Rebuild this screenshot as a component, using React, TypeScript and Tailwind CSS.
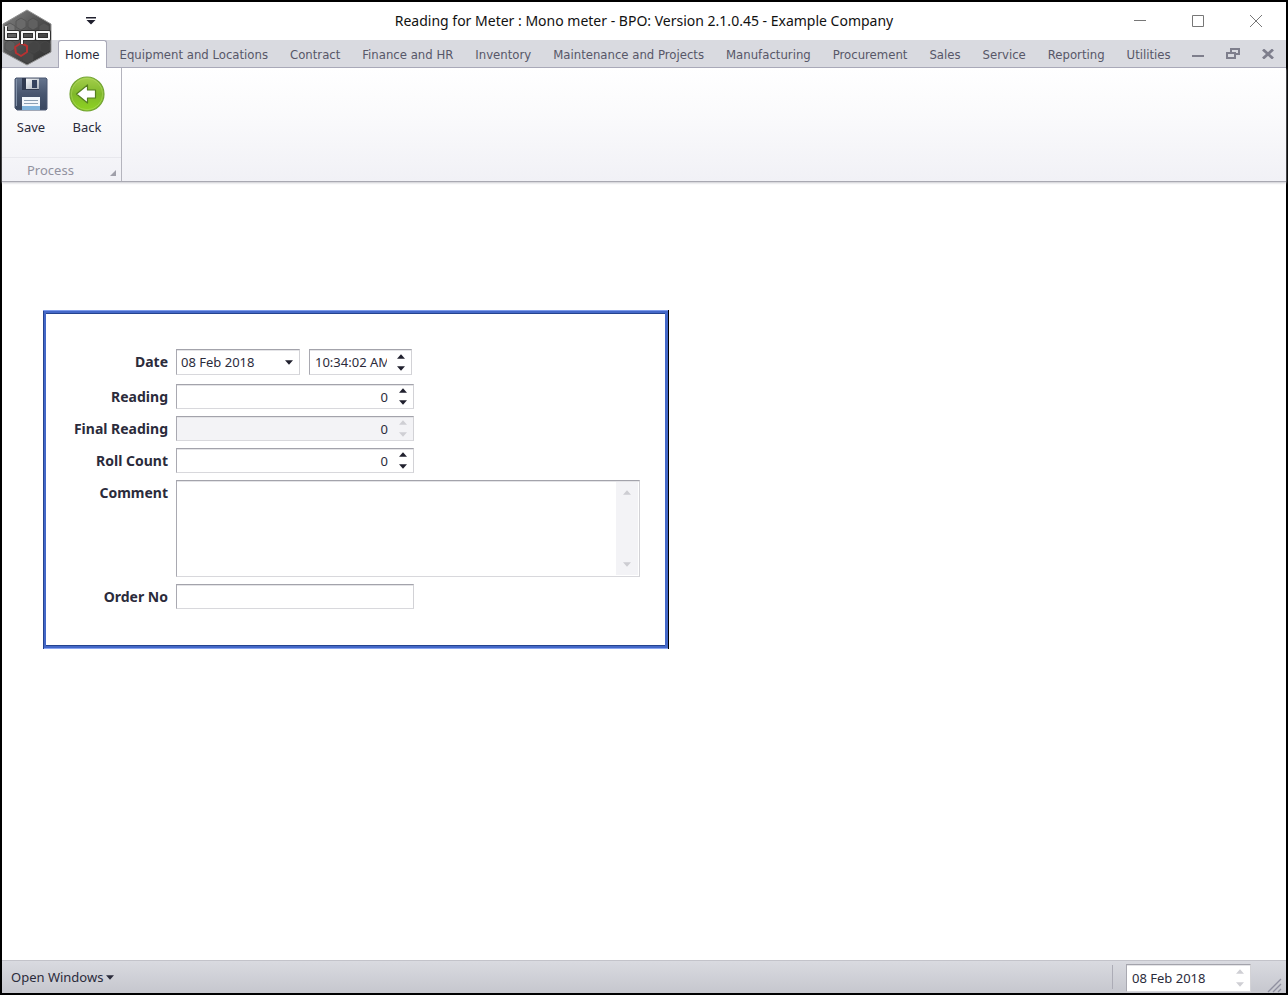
import { useId, useState } from "react";
import type { ReactNode } from "react";

const tabs = [
  "Home",
  "Equipment and Locations",
  "Contract",
  "Finance and HR",
  "Inventory",
  "Maintenance and Projects",
  "Manufacturing",
  "Procurement",
  "Sales",
  "Service",
  "Reporting",
  "Utilities",
];

const fieldBox =
  "flex items-stretch border border-t-[#a3a3ab] border-l-[#a9a9b1] border-r-[#d2d2d6] border-b-[#d8d8dc] shadow-[inset_0_1px_0_#e4e4e7]";

function Arrow({ down = false }: { down?: boolean }) {
  return (
    <svg width="8" height="5" viewBox="0 0 8 5" fill="currentColor" aria-hidden="true">
      <path d={down ? "M0 0.3h8L4 4.8z" : "M4 0.2l4 4.5H0z"} />
    </svg>
  );
}

function Spinner({ name, disabled = false, onStep }: { name: string; disabled?: boolean; onStep?: (n: number) => void }) {
  return (
    <div className={`flex w-5 shrink-0 flex-col ${disabled ? "text-[#cfcfd4]" : "text-[#20202e]"}`}>
      <button
        type="button"
        disabled={disabled}
        aria-label={`Increase ${name}`}
        onClick={() => onStep?.(1)}
        className="flex flex-1 items-center justify-center"
      >
        <Arrow />
      </button>
      <button
        type="button"
        disabled={disabled}
        aria-label={`Decrease ${name}`}
        onClick={() => onStep?.(-1)}
        className="flex flex-1 items-center justify-center"
      >
        <Arrow down />
      </button>
    </div>
  );
}

function Row({ id, label, children }: { id: string; label: string; children: ReactNode }) {
  return (
    <>
      <label htmlFor={id} className="pt-[3px] text-right text-[14px] leading-5 font-bold">
        {label}
      </label>
      <div className="min-w-0">{children}</div>
    </>
  );
}

function NumberRow({ label, disabled = false }: { label: string; disabled?: boolean }) {
  const id = useId();
  const [value, setValue] = useState(0);
  return (
    <Row id={id} label={label}>
      <div className={`${fieldBox} h-[25px] w-[238px] ${disabled ? "bg-[#f3f3f6]" : "bg-white"}`}>
        <input
          id={id}
          type="text"
          inputMode="numeric"
          value={value}
          disabled={disabled}
          onChange={(e) => setValue(Number(e.target.value) || 0)}
          className="min-w-0 flex-1 bg-transparent pr-[5px] text-right outline-none"
        />
        <Spinner name={label} disabled={disabled} onStep={(n) => setValue(value + n)} />
      </div>
    </Row>
  );
}

function Logo() {
  return (
    <svg width="50" height="58" viewBox="0 0 50 58" aria-label="bpo" role="img">
      <defs>
        <linearGradient id="hex" x1="0" y1="0" x2="1" y2="1">
          <stop offset="0" stopColor="#858585" />
          <stop offset="0.5" stopColor="#4f4f4f" />
          <stop offset="1" stopColor="#2c2c2c" />
        </linearGradient>
      </defs>
      <path d="M25 1L49 15V43L25 56L1 43V15z" fill="url(#hex)" stroke="#929292" />
      <g fill="#6a6a6a" stroke="#4a4a4a" strokeWidth="0.6">
        <path d="M14 12l5-3 5 3v6l-5 3-5-3z" />
        <path d="M26 12l5-3 5 3v6l-5 3-5-3z" fill="#606060" />
        <path d="M37 17l5-3 5 3v6l-5 3-5-3z" fill="#555" />
        <path d="M3 17l5-3 5 3v6l-5 3-5-3z" fill="#777" />
        <path d="M27 35l5-3 5 3v6l-5 3-5-3z" fill="#444" />
        <path d="M38 35l5-3 5 3v6l-5 3-5-3z" fill="#404040" />
        <path d="M3 34l5-3 5 3v6l-5 3-5-3z" fill="#5d5d5d" />
        <path d="M21 46l5-3 5 3v5l-5 3-5-3z" fill="#484848" />
      </g>
      <path d="M13 38l6-4 6 3v6l-6 4-5-3z" fill="none" stroke="#b83232" strokeWidth="2" strokeLinejoin="round" />
      <g fill="none" strokeLinejoin="round">
        <g stroke="#303030" strokeWidth="4">
          <path d="M4 18v12h12v-7H4M20 35V23h12v7H20M35 23h12v7H35z" />
        </g>
        <g stroke="#f6f6f6" strokeWidth="2">
          <path d="M4 17v13h12v-7H4M20 35V23h12v7H20M35 23h12v7H35z" />
        </g>
      </g>
    </svg>
  );
}

function SaveIcon() {
  return (
    <svg width="34" height="34" viewBox="0 0 34 34" aria-hidden="true">
      <defs>
        <linearGradient id="disk" x1="0" y1="0" x2="0" y2="1">
          <stop offset="0" stopColor="#66758e" />
          <stop offset="0.5" stopColor="#48566f" />
          <stop offset="1" stopColor="#39465e" />
        </linearGradient>
        <linearGradient id="shutter" x1="0" y1="0" x2="1" y2="1">
          <stop offset="0" stopColor="#f6f8fa" />
          <stop offset="1" stopColor="#aab2bd" />
        </linearGradient>
      </defs>
      <path d="M2 1h30l1 1v30l-1 1H3l-2-2V2z" fill="url(#disk)" stroke="#4a5770" />
      <path d="M2.5 2v27" stroke="#8291a8" />
      <path d="M8 1h17v12H8z" fill="#303a50" />
      <path d="M12 1.5h13v10.5H12z" fill="url(#shutter)" />
      <path d="M18 3h5v8h-5z" fill="#34425e" />
      <path d="M8 20h18v13H8z" fill="#f2f7fb" />
      <path d="M8 29h18v4H8z" fill="#7fb4dc" />
      <path d="M10 23.500h14M10 26.500h14" stroke="#8ba0b4" />
    </svg>
  );
}

function BackIcon() {
  return (
    <svg width="36" height="36" viewBox="0 0 36 36" aria-hidden="true">
      <defs>
        <linearGradient id="green" x1="0" y1="0" x2="0" y2="1">
          <stop offset="0" stopColor="#a5cf4c" />
          <stop offset="0.5" stopColor="#7fb82a" />
          <stop offset="1" stopColor="#8fd420" />
        </linearGradient>
      </defs>
      <circle cx="18" cy="18" r="17" fill="url(#green)" stroke="#74a534" strokeWidth="1.200" />
      <circle cx="18" cy="18" r="15.700" fill="none" stroke="#b6dc6c" strokeOpacity="0.5" />
      <path d="M7.500 18L18.500 9V14H26.500v8h-8v5z" fill="#fff" stroke="#557f20" strokeWidth="1.200" strokeLinejoin="round" />
    </svg>
  );
}

export default function App() {
  const [active, setActive] = useState("Home");
  return (
    <div className="flex min-h-screen flex-col border-2 border-black bg-white font-['Noto_Sans',sans-serif] text-[13px] leading-5 text-[#2b2b3b]">
      <header className="relative">
        <div className="grid h-[38px] grid-cols-[1fr_auto_1fr] items-center">
          <button type="button" aria-label="Customize quick access" className="ml-[84px] w-[10px] justify-self-start">
            <svg width="10" height="8" viewBox="0 0 10 8" fill="#20202e" aria-hidden="true">
              <path d="M0 0h10v1.500H0zM0.500 3h9L5 7.500z" />
            </svg>
          </button>
          <h1 className="text-[14px] text-[#111]">Reading for Meter : Mono meter - BPO: Version 2.1.0.45 - Example Company</h1>
          <div className="flex h-full items-center justify-end gap-[46px] pr-6 text-[#777]">
            <button type="button" aria-label="Minimize">
              <svg width="12" height="12" viewBox="0 0 12 12" stroke="currentColor" fill="none"><path d="M0 5.500h12" /></svg>
            </button>
            <button type="button" aria-label="Maximize">
              <svg width="12" height="12" viewBox="0 0 12 12" stroke="currentColor" fill="none"><path d="M0.500 0.500h11v11h-11z" /></svg>
            </button>
            <button type="button" aria-label="Close">
              <svg width="12" height="12" viewBox="0 0 12 12" stroke="currentColor" fill="none"><path d="M0 0l12 12M12 0L0 12" /></svg>
            </button>
          </div>
        </div>

        <div className="flex h-7 items-stretch border-b border-[#a9a9b8] bg-[#d9dae0] pl-14">
          <nav className="flex min-w-0 font-['DejaVu_Sans_Condensed','Noto_Sans',sans-serif]" aria-label="Ribbon">
            {tabs.map((t) => (
              <button
                key={t}
                type="button"
                aria-current={t === active ? "page" : undefined}
                onClick={() => setActive(t)}
                className={
                  t === active
                    ? "-mb-px mr-[2px] rounded-t-[3px] border border-b-0 border-[#a9a9b8] bg-white px-[6px] pt-px whitespace-nowrap"
                    : "px-[11px] pt-[2px] whitespace-nowrap text-[#575768]"
                }
              >
                {t}
              </button>
            ))}
          </nav>
          <div className="ml-auto flex items-center gap-[22px] pr-[12px] text-[#7e7e8c]">
            <button type="button" aria-label="Minimize child window">
              <svg width="12" height="12" viewBox="0 0 12 12" fill="currentColor"><path d="M0 7h12v2H0z" /></svg>
            </button>
            <button type="button" aria-label="Restore child window">
              <svg width="14" height="12" viewBox="0 0 14 12" fill="none" stroke="currentColor" strokeWidth="2"><path d="M5 4V1h8v5h-3M1 5h8v5H1z" /></svg>
            </button>
            <button type="button" aria-label="Close child window">
              <svg width="12" height="10" viewBox="0 0 12 10" fill="none" stroke="currentColor" strokeWidth="2.800"><path d="M1 0.500l10 9M11 0.500l-10 9" /></svg>
            </button>
          </div>
        </div>
        <div className="absolute top-[7px] left-0">
          <Logo />
        </div>
      </header>

      <section
        aria-label="Home"
        className="flex h-[114px] border-b border-[#a9a9b2] bg-linear-to-b from-white via-[#f9f9fb] to-[#f1f1f6] shadow-[0_1px_2px_#c9c9cf]"
      >
        <div className="flex w-[120px] flex-col border-r border-[#b4b4bd]">
          <div className="flex flex-1 items-start gap-[6px] pt-2 pl-1">
            <button type="button" className="flex w-[50px] flex-col items-center gap-[5px]">
              <span className="flex h-9 items-center"><SaveIcon /></span>
              Save
            </button>
            <button type="button" className="flex w-[50px] flex-col items-center gap-[5px]">
              <BackIcon />
              Back
            </button>
          </div>
          <div className="flex h-[24px] items-center border-t border-[#e8e8ed] pr-[5px] pl-[25px] text-[#9292a0]">
            Process
            <button type="button" aria-label="Process options" className="mt-[6px] ml-auto">
              <svg width="6" height="6" viewBox="0 0 6 6" fill="#a0a0aa" aria-hidden="true"><path d="M6 0v6H0z" /></svg>
            </button>
          </div>
        </div>
      </section>

      <main className="flex-1 px-[41px] pt-[128px] pb-10">
        <form
          onSubmit={(e) => e.preventDefault()}
          className="w-[626px] max-w-full border-r border-black bg-[#4468c8] p-[3px] shadow-[inset_0_1px_0_#7d9bec,inset_1px_0_0_#24438f,inset_0_-1px_0_#8aa6f2]"
        >
          <div className="grid grid-cols-[122px_1fr] gap-x-2 gap-y-[7px] border-t border-b border-[#24438f] bg-white pt-[35px] pr-[25px] pb-[36px]">
            <Row id="date" label="Date">
              <div className="flex gap-[9px] pb-[2px]">
                <div className={`${fieldBox} h-[26px] w-[124px]`}>
                  <input id="date" type="text" defaultValue="08 Feb 2018" className="min-w-0 flex-1 pl-1 outline-none" />
                  <button type="button" aria-label="Choose date" className="flex w-5 items-center justify-center text-[#20202e]">
                    <Arrow down />
                  </button>
                </div>
                <div className={`${fieldBox} h-[26px] w-[103px]`}>
                  <input type="text" aria-label="Time" defaultValue="10:34:02 AM" className="ml-[5px] w-[72px] min-w-0 outline-none" />
                  <span className="flex-1" />
                  <Spinner name="time" />
                </div>
              </div>
            </Row>
            <NumberRow label="Reading" />
            <NumberRow label="Final Reading" disabled />
            <NumberRow label="Roll Count" />
            <Row id="comment" label="Comment">
              <div className={`${fieldBox} h-[97px]`}>
                <textarea id="comment" className="min-w-0 flex-1 resize-none px-1 outline-none" />
                <div className="my-px mr-px flex w-[22px] flex-col items-center justify-between bg-[#f3f3f6] py-2 text-[#cdcdd2]">
                  <Arrow />
                  <Arrow down />
                </div>
              </div>
            </Row>
            <Row id="order" label="Order No">
              <input
                id="order"
                type="text"
                className={`${fieldBox} h-[25px] w-[238px] px-1 outline-none`}
              />
            </Row>
          </div>
        </form>
      </main>

      <footer className="flex h-[33px] items-stretch border-t border-[#c3c3ca] bg-linear-to-b from-[#d9dae0] to-[#c6c7ce] pl-[9px]">
        <button type="button" className="flex items-center gap-[3px]">
          Open Windows
          <Arrow down />
        </button>
        <div className="ml-auto flex items-stretch">
          <span className="my-1 mr-[13px] w-px bg-[#acacb6]" />
          <div className={`${fieldBox} mt-[3px] mb-px w-[125px] bg-white`}>
            <input type="text" aria-label="Current date" defaultValue="08 Feb 2018" className="min-w-0 flex-1 pl-[5px] outline-none" />
            <Spinner name="current date" disabled />
          </div>
          <svg className="mr-1 ml-4 self-end" width="15" height="16" viewBox="0 0 15 16" stroke="#9090a0" strokeWidth="1.300" aria-hidden="true">
            <path d="M1 15L14 2M6 15l8-8M11 15l3-3" />
          </svg>
        </div>
      </footer>
    </div>
  );
}
